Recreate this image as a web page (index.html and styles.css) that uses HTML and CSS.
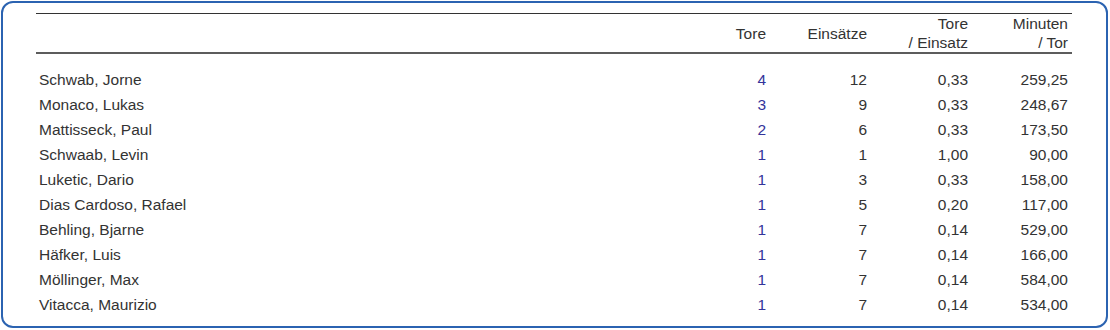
FILE: index.html
```html
<!DOCTYPE html>
<html lang="de">
<head>
<meta charset="utf-8">
<title>Torschützen</title>
<link rel="stylesheet" href="styles.css">
</head>
<body>
<div class="panel">
  <div class="table">
    <div class="head">
      <div class="hc name"></div>
      <div class="hc">Tore</div>
      <div class="hc">Einsätze</div>
      <div class="hc">Tore<br>/ Einsatz</div>
      <div class="hc">Minuten<br>/ Tor</div>
    </div>
    <div class="body">
      <div class="row"><div class="name">Schwab, Jorne</div><div class="goals">4</div><div>12</div><div>0,33</div><div>259,25</div></div>
      <div class="row"><div class="name">Monaco, Lukas</div><div class="goals">3</div><div>9</div><div>0,33</div><div>248,67</div></div>
      <div class="row"><div class="name">Mattisseck, Paul</div><div class="goals">2</div><div>6</div><div>0,33</div><div>173,50</div></div>
      <div class="row"><div class="name">Schwaab, Levin</div><div class="goals">1</div><div>1</div><div>1,00</div><div>90,00</div></div>
      <div class="row"><div class="name">Luketic, Dario</div><div class="goals">1</div><div>3</div><div>0,33</div><div>158,00</div></div>
      <div class="row"><div class="name">Dias Cardoso, Rafael</div><div class="goals">1</div><div>5</div><div>0,20</div><div>117,00</div></div>
      <div class="row"><div class="name">Behling, Bjarne</div><div class="goals">1</div><div>7</div><div>0,14</div><div>529,00</div></div>
      <div class="row"><div class="name">Häfker, Luis</div><div class="goals">1</div><div>7</div><div>0,14</div><div>166,00</div></div>
      <div class="row"><div class="name">Möllinger, Max</div><div class="goals">1</div><div>7</div><div>0,14</div><div>584,00</div></div>
      <div class="row"><div class="name">Vitacca, Maurizio</div><div class="goals">1</div><div>7</div><div>0,14</div><div>534,00</div></div>
    </div>
  </div>
</div>
</body>
</html>
```
FILE: styles.css
```css
html, body {
  margin: 0;
  padding: 0;
  background: #ffffff;
}
body {
  font-family: "Liberation Sans", Arial, sans-serif;
  font-size: 15.5px;
  color: #333333;
}
.panel {
  box-sizing: border-box;
  margin: 1px 0 0 1px;
  width: 1107px;
  height: 327px;
  border: 2px solid #2b63b1;
  border-radius: 12px;
  padding: 10px 34px 0 33px;
}
.head, .row {
  display: grid;
  grid-template-columns: 1fr 101px 101px 101px 100px;
}
.head {
  border-top: 1px solid #333333;
  border-bottom: 2px solid #5c5c5c;
  height: 38px;
}
.hc {
  display: flex;
  align-items: center;
  justify-content: flex-end;
  text-align: right;
  padding-right: 4px;
  line-height: 19px;
}
.body {
  padding-top: 13px;
}
.row {
  height: 25px;
  line-height: 25px;
}
.row > div {
  text-align: right;
  padding-right: 4px;
}
.row > .name {
  text-align: left;
  padding-left: 3px;
  padding-right: 0;
}
.row > .goals {
  color: #34349a;
}
```
